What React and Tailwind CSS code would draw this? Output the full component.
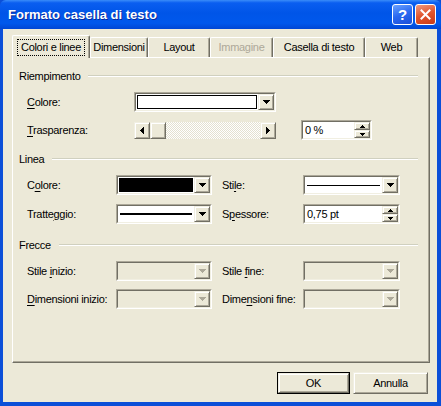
import React from "react";

const raised =
  "border border-t-[#f1efe2] border-l-[#f1efe2] border-r-[#716f64] border-b-[#716f64] shadow-[inset_1px_1px_#ffffff,inset_-1px_-1px_#aca899] bg-[#ece9d8]";

function Sunken({ className, children }) {
  return (
    <div className={"border border-t-[#aca899] border-l-[#aca899] border-r-white border-b-white " + className}>
      <div className="h-full flex border border-t-[#716f64] border-l-[#716f64] border-r-[#f1efe2] border-b-[#f1efe2]">
        {children}
      </div>
    </div>
  );
}

function Arrow({ dir = "down", color = "#000" }) {
  if (dir === "left")
    return (
      <svg width="4" height="7" shapeRendering="crispEdges">
        <polygon points="4,0 4,7 0,3.5" fill={color} />
      </svg>
    );
  if (dir === "right")
    return (
      <svg width="4" height="7" shapeRendering="crispEdges">
        <polygon points="0,0 0,7 4,3.5" fill={color} />
      </svg>
    );
  if (dir === "up")
    return (
      <svg width="5" height="3" shapeRendering="crispEdges">
        <polygon points="0,3 5,3 2.5,0" fill={color} />
      </svg>
    );
  if (dir === "dn")
    return (
      <svg width="5" height="3" shapeRendering="crispEdges">
        <polygon points="0,0 5,0 2.5,3" fill={color} />
      </svg>
    );
  return (
    <svg width="7" height="4" shapeRendering="crispEdges">
      <polygon points="0,0 7,0 3.5,4" fill={color} />
    </svg>
  );
}

function DropButton({ disabled }) {
  return (
    <div className={"w-4 h-full flex items-center justify-center " + raised}>
      <Arrow color={disabled ? "#aca899" : "#000"} />
    </div>
  );
}

function Combo({ w, children, disabled }) {
  return (
    <Sunken className={w + " h-[20px]"}>
      <div className={"flex-1 p-[1px] flex " + (disabled ? "bg-[#ece9d8]" : "bg-white")}>{children}</div>
      <DropButton disabled={disabled} />
    </Sunken>
  );
}

function Spin({ w, value }) {
  return (
    <Sunken className={w + " h-[20px]"}>
      <div className="flex-1 bg-white pl-[2px] flex items-center">{value}</div>
      <div className="w-4 flex flex-col">
        <div className={"flex-1 flex items-center justify-center " + raised}>
          <Arrow dir="up" />
        </div>
        <div className={"flex-1 flex items-center justify-center " + raised}>
          <Arrow dir="dn" />
        </div>
      </div>
    </Sunken>
  );
}

function Group({ title, lineMargin }) {
  return (
    <div className="flex items-center h-[14px] pl-[6px] mr-[11px]">
      <span>{title}</span>
      <div className={"flex-1 border-t border-t-[#d0d0bf] border-b border-b-white " + lineMargin} />
    </div>
  );
}

function U({ children }) {
  return <span className="underline underline-offset-2">{children}</span>;
}

const tabs = [
  { label: "Colori e linee", w: "w-[78px]", active: true },
  { label: "Dimensioni", w: "w-[58px]" },
  { label: "Layout", w: "w-[62px]" },
  { label: "Immagine", w: "w-[63px]", disabled: true },
  { label: "Casella di testo", w: "w-[92px]" },
  { label: "Web", w: "w-[53px]" },
];

export default function App() {
  return (
    <div className="w-[441px] h-[406px] flex flex-col bg-[#0b4fd8] font-['Liberation_Sans',Arial,sans-serif] text-[11px] tracking-[-0.3px] text-black select-none">
      {/* title bar */}
      <div className="h-[29px] flex items-center pl-[8px] pr-[5px] bg-[linear-gradient(180deg,#3a8cf9_0%,#0a5ef0_10%,#0055e8_45%,#0058ec_80%,#0046d4_100%)] rounded-t-[6px]">
        <span className="flex-1 text-white font-bold text-[13px] tracking-normal [text-shadow:1px_1px_#0a2a9a]">
          Formato casella di testo
        </span>
        <div className="w-[21px] h-[21px] rounded-[3px] border border-white bg-[linear-gradient(160deg,#6aa2ff_0%,#2a68f0_50%,#1a4fd8_100%)] flex items-center justify-center text-white font-bold text-[15px] leading-none">
          ?
        </div>
        <div className="w-[21px] h-[21px] ml-[2px] rounded-[3px] border border-white bg-[linear-gradient(160deg,#f09a80_0%,#e0552e_50%,#c83a18_100%)] flex items-center justify-center">
          <svg width="11" height="11">
            <path d="M1.5 1.5L9.5 9.5M9.5 1.5L1.5 9.5" stroke="#fff" strokeWidth="2" strokeLinecap="square" />
          </svg>
        </div>
      </div>

      {/* body */}
      <div className="flex-1 flex flex-col border-l-[3px] border-r-[4px] border-b-[4px] border-[#0b4fd8] bg-[#ece9d8]">
        {/* tabs */}
        <div className="flex items-end h-[22px] mt-[6px] ml-[9px]">
          {tabs.map((t) => (
            <div
              key={t.label}
              className={
                t.w +
                " flex items-center justify-center border-t border-l border-t-white border-l-white border-r border-r-[#716f64] shadow-[inset_-1px_0_#aca899] rounded-t-[2px] " +
                (t.active ? "h-[23px] -mb-px relative z-10 bg-[#ece9d8]" : "h-[20px]") +
                (t.disabled ? " text-[#aca899]" : "")
              }
            >
              {t.active ? (
                <span className="border border-dotted border-black px-[3px] py-[1px] leading-[13px]">{t.label}</span>
              ) : (
                t.label
              )}
            </div>
          ))}
        </div>

        {/* panel */}
        <div className="ml-[9px] w-[418px] h-[306px] flex flex-col border-t border-l border-t-white border-l-white border-r border-b border-r-[#716f64] border-b-[#716f64] shadow-[inset_-1px_-1px_#aca899]">
          <div className="mt-[11px]">
            <Group title="Riempimento" lineMargin="ml-[7px]" />
          </div>
          <div className="mt-[9px] flex items-center h-[20px] pl-[14px]">
            <span className="w-[107px]">
              <U>C</U>olore:
            </span>
            <Combo w="w-[142px]">
              <div className="flex-1 border border-black bg-white" />
            </Combo>
          </div>
          <div className="mt-[8px] flex items-center h-[20px] pl-[14px]">
            <span className="w-[107px]">
              <U>T</U>rasparenza:
            </span>
            <div className="w-[142px] h-[17px] flex">
              <div className={"w-[16px] flex items-center justify-center " + raised}>
                <Arrow dir="left" />
              </div>
              <div className={"w-[16px] " + raised} />
              <div className="flex-1 bg-[repeating-conic-gradient(#ffffff_0%_25%,#e4e1d0_0%_50%)] bg-[length:2px_2px]" />
              <div className={"w-[16px] flex items-center justify-center " + raised}>
                <Arrow dir="right" />
              </div>
            </div>
            <div className="ml-[25px]">
              <Spin w="w-[71px]" value="0 %" />
            </div>
          </div>

          <div className="mt-[12px]">
            <Group title="Linea" lineMargin="ml-[8px]" />
          </div>
          <div className="mt-[9px] flex items-center h-[20px] pl-[14px]">
            <span className="w-[89px]">
              C<U>o</U>lore:
            </span>
            <Combo w="w-[96px]">
              <div className="flex-1 bg-black" />
            </Combo>
            <span className="w-[81px] ml-[10px]">
              Sti<U>l</U>e:
            </span>
            <Combo w="w-[97px]">
              <div className="flex-1 flex items-center px-[1px]">
                <div className="flex-1 h-px bg-black" />
              </div>
            </Combo>
          </div>
          <div className="mt-[9px] flex items-center h-[20px] pl-[14px]">
            <span className="w-[89px]">
              Tratte<U>g</U>gio:
            </span>
            <Combo w="w-[96px]">
              <div className="flex-1 flex items-center px-[1px]">
                <div className="flex-1 h-[2px] bg-black" />
              </div>
            </Combo>
            <span className="w-[81px] ml-[10px]">
              S<U>p</U>essore:
            </span>
            <Spin w="w-[97px]" value="0,75 pt" />
          </div>

          <div className="mt-[14px]">
            <Group title="Frecce" lineMargin="ml-[8px]" />
          </div>
          <div className="mt-[9px] flex items-center h-[20px] pl-[14px]">
            <span className="w-[89px]">
              Stile <U>i</U>nizio:
            </span>
            <Combo w="w-[96px]" disabled />
            <span className="w-[81px] ml-[10px]">
              Stile <U>f</U>ine:
            </span>
            <Combo w="w-[97px]" disabled />
          </div>
          <div className="mt-[8px] flex items-center h-[20px] pl-[14px]">
            <span className="w-[89px]">
              <U>D</U>imensioni inizio:
            </span>
            <Combo w="w-[96px]" disabled />
            <span className="w-[81px] ml-[10px]">
              Dime<U>n</U>sioni fine:
            </span>
            <Combo w="w-[97px]" disabled />
          </div>
        </div>

        {/* buttons */}
        <div className="mt-[9px] flex justify-end pr-[9px] gap-[3px]">
          <div className="w-[73px] h-[22px] border border-black">
            <div className={"h-full flex items-center justify-center " + raised}>OK</div>
          </div>
          <div className={"w-[75px] h-[22px] flex items-center justify-center " + raised}>Annulla</div>
        </div>
      </div>
    </div>
  );
}
